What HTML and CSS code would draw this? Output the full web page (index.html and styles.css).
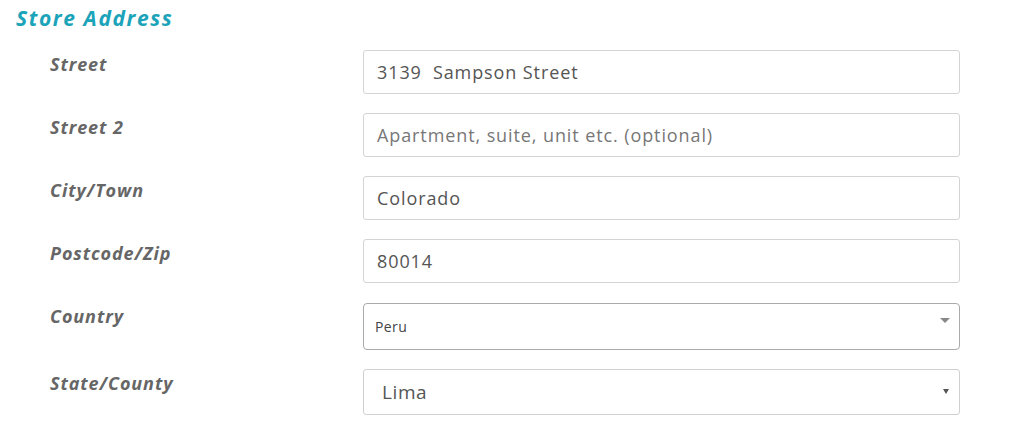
FILE: index.html
```html
<!DOCTYPE html>
<html lang="en">
<head>
  <meta charset="UTF-8">
  <meta name="viewport" content="width=device-width, initial-scale=1.0">
  <title>Store Address</title>
  <link rel="stylesheet" href="styles.css">
</head>
<body>

  <div class="store-address">
    <h2>Store Address</h2>

    <div class="form-row">
      <label for="street">Street</label>
      <input type="text" id="street" value="3139  Sampson Street">
    </div>

    <div class="form-row">
      <label for="street2">Street 2</label>
      <input type="text" id="street2" placeholder="Apartment, suite, unit etc. (optional)">
    </div>

    <div class="form-row">
      <label for="city">City/Town</label>
      <input type="text" id="city" value="Colorado">
    </div>

    <div class="form-row">
      <label for="zip">Postcode/Zip</label>
      <input type="text" id="zip" value="80014">
    </div>

    <div class="form-row">
      <label for="country">Country</label>
      <div class="select-wrap country-wrap">
        <select id="country" class="country-select">
          <option>Peru</option>
        </select>
      </div>
    </div>

    <div class="form-row">
      <label for="state">State/County</label>
      <div class="select-wrap state-wrap">
        <select id="state" class="state-select">
          <option>Lima</option>
        </select>
      </div>
    </div>
  </div>

</body>
</html>
```

FILE: styles.css
```css
/* base */
body {
  margin: 0;
  padding: 0;
  background-color: #fff;
  font-family: 'Open Sans', 'Noto Sans', sans-serif;
  color: #666;
}

.store-address {
  padding: 4px 51px 0 16px;
}

.store-address h2 {
  margin: 0 0 18px 0;
  font-size: 21px;
  line-height: 28px;
  font-weight: bold;
  font-style: italic;
  color: #1ba3b9;
  letter-spacing: 1.6px;
}

.form-row {
  display: flex;
  align-items: flex-start;
  margin-bottom: 19px;
}

.form-row label {
  width: 347px;
  flex-shrink: 0;
  box-sizing: border-box;
  padding-left: 34px;
  margin-top: 1px;
  font-size: 18px;
  line-height: 26px;
  font-weight: bold;
  font-style: italic;
  letter-spacing: 0.9px;
  color: #666;
}

.form-row input {
  flex: 1;
  box-sizing: border-box;
  height: 44px;
  margin: 0;
  padding: 0 13px;
  border: 1px solid #d4d4d4;
  border-radius: 3px;
  font-family: inherit;
  font-size: 18px;
  letter-spacing: 0.9px;
  color: #555;
  background-color: #fff;
  outline: none;
}

.form-row input::placeholder {
  color: #777;
}

/* select boxes */
.select-wrap {
  flex: 1;
  position: relative;
}

.country-wrap {
  margin-top: 1px;
}

.select-wrap select {
  width: 100%;
  box-sizing: border-box;
  margin: 0;
  -webkit-appearance: none;
  appearance: none;
  background-color: #fff;
  font-family: inherit;
  outline: none;
}

.country-select {
  height: 47px;
  padding: 0 11px;
  border: 1px solid #aaa;
  border-radius: 4px;
  font-size: 14px;
  letter-spacing: 0.4px;
  color: #444;
}

.state-select {
  height: 46px;
  padding: 0 18px;
  border: 1px solid #d0d0d0;
  border-radius: 3px;
  font-size: 19px;
  letter-spacing: 0.6px;
  color: #555;
}

.select-wrap::after {
  content: '';
  position: absolute;
  pointer-events: none;
}

.country-wrap::after {
  right: 10px;
  top: 15px;
  border-left: 5px solid transparent;
  border-right: 5px solid transparent;
  border-top: 5px solid #888;
}

.state-wrap::after {
  right: 11px;
  top: 20px;
  border-left: 3px solid transparent;
  border-right: 3px solid transparent;
  border-top: 5px solid #555;
}
```
